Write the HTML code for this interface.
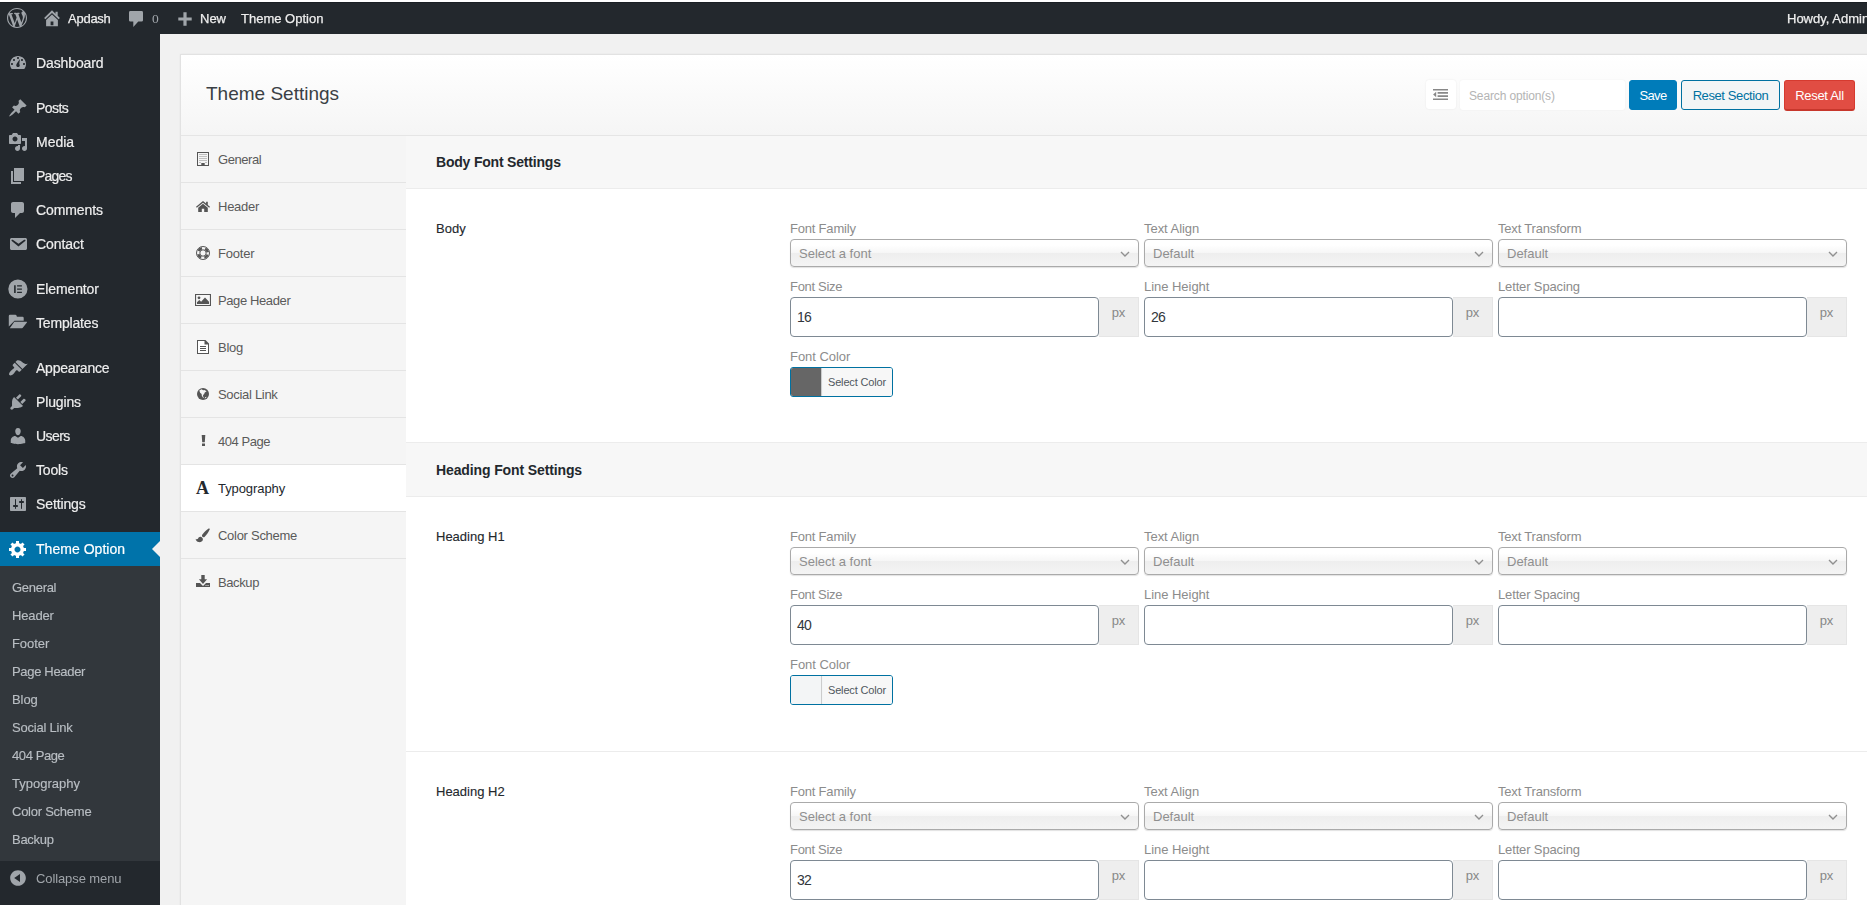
<!DOCTYPE html>
<html lang="en">
<head>
<meta charset="utf-8">
<title>Theme Settings</title>
<style>
*{box-sizing:border-box;margin:0;padding:0}
html,body{width:1867px;height:905px;overflow:hidden}
body{background:#f1f1f1;font-family:"Liberation Sans",sans-serif;font-size:13px;color:#444;position:relative}
svg{display:block}
#topline{position:absolute;left:0;top:0;width:1867px;height:2px;background:#fff}
#adminbar{position:absolute;left:0;top:2px;width:1867px;height:32px;background:#23282d;box-shadow:inset 0 1px 0 #1a1f24;color:#eee;font-size:13px}
#adminbar .t{will-change:transform;position:absolute;top:1px;line-height:32px;white-space:nowrap;-webkit-text-stroke:.25px #eee}
#adminbar svg{position:absolute}
#side{position:absolute;left:0;top:34px;width:160px;height:871px;background:#23282d}
.mi{position:absolute;left:0;width:160px;height:34px;color:#eee;font-size:14px}
.mi span{will-change:transform;position:absolute;left:36px;top:0;line-height:35px;white-space:nowrap;-webkit-text-stroke:.2px #eee}
.mi svg{position:absolute;fill:#a0a5aa}
.mi.cur{background:#0073aa;color:#fff}
.mi.cur span{-webkit-text-stroke:.2px #fff}
.mi.cur svg{fill:#fff}
.mi.cur:after{content:"";position:absolute;right:0;top:9px;border:8px solid transparent;border-right-color:#f1f1f1}
#sub{position:absolute;left:0;top:532px;width:160px;height:295px;background:#32373c}
#sub div{will-change:transform;position:absolute;left:12px;height:28px;line-height:29px;color:#b9bec3;-webkit-text-stroke:.15px #b9bec3;font-size:13px;white-space:nowrap}
#collapse{position:absolute;left:0;top:827px;width:160px;height:34px;color:#a0a5aa;font-size:13px}
#collapse span{will-change:transform;position:absolute;left:36px;line-height:35px;white-space:nowrap}
#panel{position:absolute;left:180px;top:54px;width:1700px;height:870px;background:#fff;border:1px solid #e2e2e2;box-shadow:0 0 2px rgba(0,0,0,.05)}
#phead{position:absolute;left:0;top:0;width:100%;height:81px;background:linear-gradient(#fff,#f5f5f5);border-bottom:1px solid #e5e5e5}
#phead h2{position:absolute;left:25px;top:0;line-height:78px;font-size:19px;font-weight:400;color:#3a3f44;white-space:nowrap}
#nav{position:absolute;left:0;top:81px;width:225px;height:800px;background:#f5f5f5}
.ni{position:absolute;left:0;width:225px;height:47px;border-bottom:1px solid #e4e4e4;color:#5a5a5a;font-size:13px}
.ni span{position:absolute;left:37px;top:0;line-height:48px;white-space:nowrap}
.ni svg{position:absolute;fill:#555}
.ni.act{background:#fff;color:#23282d}
.ni i.ta{position:absolute;left:15px;top:0;line-height:46px;font-family:"Liberation Serif",serif;font-weight:700;font-style:normal;font-size:18px;color:#23282d}
#main{position:absolute;left:225px;top:81px;width:1475px;height:800px;background:#fff}
.band{position:absolute;left:0;width:100%;background:#f7f7f7;border-bottom:1px solid #ececec}
.band b{position:absolute;left:30px;font-size:14px;color:#23282d;white-space:nowrap;line-height:16px}
.rowline{position:absolute;left:0;width:100%;height:1px;background:#ececec}
.flabel{position:absolute;left:30px;font-size:13px;color:#23282d;white-space:nowrap;line-height:16px;-webkit-text-stroke:.12px #23282d}
.lb{position:absolute;font-size:13px;color:#8c8c8c;white-space:nowrap;line-height:16px}
.sel{position:absolute;height:28px;border:1px solid #aaa;border-radius:4px;background:linear-gradient(#fff 20%,#f6f6f6 50%,#eee 52%,#f4f4f4);box-shadow:0 1px 1px rgba(0,0,0,.12);color:#8f8f8f;font-size:13px;line-height:27px;padding-left:8px;white-space:nowrap}
.sel svg{position:absolute;right:8px;top:11px}
.inp{position:absolute;height:40px;border:1px solid #7e8993;border-radius:4px;background:#fff;color:#32373c;font-size:14px;line-height:38px;padding-left:6px;letter-spacing:-.7px}
.px{position:absolute;width:40px;height:40px;background:#eee;border:1px solid #e5e5e5;border-left:0;color:#888;font-size:13px;text-align:center;line-height:30px}
.cp{position:absolute;width:103px;height:30px;border:1px solid #0071a1;border-radius:3px;background:#f3f5f6;overflow:hidden}
.cp i{position:absolute;left:0;top:0;width:31px;height:28px;border-right:1px solid #ccc}
.cp span{position:absolute;left:32px;top:0;width:70px;padding-left:5px;background:#f7f7f7;line-height:28px;font-size:11px;color:#50575e;white-space:nowrap}
.btn{position:absolute;top:25px;height:30px;border-radius:3px;font-size:13px;line-height:30px;text-align:center;white-space:nowrap}
#exp{position:absolute;left:1245px;top:25px;width:30px;height:29px;background:#fff;border-radius:3px;box-shadow:0 0 2px rgba(0,0,0,.08)}
#exp svg{position:absolute;left:7px;top:9px}
#search{position:absolute;left:1279px;top:25px;width:165px;height:30px;background:#fff;border-radius:3px;color:#b4b4b4;font-size:12px;line-height:33px;padding-left:9px;box-shadow:0 0 2px rgba(0,0,0,.06);white-space:nowrap}
#bsave{left:1448px;width:48px;background:#007cba;color:#fff;border:1px solid #007cba}
#breset{left:1500px;width:99px;background:#f3f5f6;color:#0071a1;border:1px solid #0071a1}
#ball{left:1603px;width:71px;height:31px;background:#e14d43;color:#fff;border:1px solid #d63a2f;border-bottom:2px solid #c7372c;line-height:29px}
</style>
</head>
<body>
<div id="panel">
  <div id="phead"><h2>Theme Settings</h2>
    <div id="exp"><svg width="15" height="11" viewBox="0 0 15 11"><path fill="#888" d="M0 0h15v1.600H0zM4.600 3.100H15v1.600H4.600zM4.600 6.300H15v1.600H4.600zM0 9.400h15V11H0zM3.200 2.700v5.600L.1 5.500z"/></svg></div>
    <div id="search" style="letter-spacing:-.14px">Search option(s)</div>
    <div class="btn" id="bsave" style="letter-spacing:-.7px">Save</div>
    <div class="btn" id="breset" style="letter-spacing:-.4px">Reset Section</div>
    <div class="btn" id="ball" style="letter-spacing:-.3px">Reset All</div>
  </div>
  <div id="nav">
    <div class="ni" style="top:0px"><svg style="left:16px;top:16px" width="12" height="14" viewBox="0 0 12 14"><path fill-rule="evenodd" d="M0 0h12v14H0zM1 1v12h3.300v-2h3.400v2H11V1z"/><path fill="#8a8a8a" d="M2.5 2h1v1h-1zM4.5 2h1v1h-1zM6.5 2h1v1h-1zM8.5 2h1v1h-1zM2.5 4h1v1h-1zM4.5 4h1v1h-1zM6.5 4h1v1h-1zM8.5 4h1v1h-1zM2.5 6h1v1h-1zM4.5 6h1v1h-1zM6.5 6h1v1h-1zM8.5 6h1v1h-1zM2.5 8h1v1h-1zM4.5 8h1v1h-1zM6.5 8h1v1h-1zM8.5 8h1v1h-1zM2.5 10h1v1h-1zM8.500 10h1v1h-1z"/></svg><span style="letter-spacing:-0.44px">General</span></div>
    <div class="ni" style="top:47px"><svg style="left:15px;top:18px" width="14" height="11" viewBox="0 0 14 11"><path d="M7 0L0 5.800l.8.900L7 1.700l6.200 5 .8-.9-2.200-1.800V.8h-1.700v1.800zM7 2.800L2.200 6.700V11h3.600V7.800h2.400V11h3.600V6.700z"/></svg><span style="letter-spacing:-0.25px">Header</span></div>
    <div class="ni" style="top:94px"><svg style="left:15px;top:16px" width="14" height="14" viewBox="0 0 14 14"><g fill="none" stroke="#555"><circle cx="7" cy="7" r="6.500" stroke-width="1"/><circle cx="7" cy="7" r="3.200" stroke-width="1"/><circle cx="7" cy="7" r="4.850" stroke-width="2.600" stroke-dasharray="4.300 3.320" stroke-dashoffset="-1.650"/></g></svg><span style="letter-spacing:-0.20px">Footer</span></div>
    <div class="ni" style="top:141px"><svg style="left:14px;top:17px" width="16" height="12" viewBox="0 0 16 12"><path fill-rule="evenodd" d="M0 0h16v12H0zM1.100 1.100v9.800h13.800V1.100z"/><circle cx="4" cy="3.800" r="1.400"/><path d="M2 10V8.300l2.300-2.200 1.800 1.600L10 3.600l4 4.200V10z"/></svg><span style="letter-spacing:-0.39px">Page Header</span></div>
    <div class="ni" style="top:188px"><svg style="left:16px;top:16px" width="12" height="14" viewBox="0 0 12 14"><path fill="#fff" d="M.5.500h7.800l3.200 3.200v9.800H.5z"/><path fill-rule="evenodd" d="M0 0h8.500L12 3.500V14H0zM1 1v12h10V4.500H7.500V1z"/><path d="M3 6h6v.9H3zM3 8h6v.9H3zM3 10h6v.9H3z"/></svg><span style="letter-spacing:-0.28px">Blog</span></div>
    <div class="ni" style="top:235px"><svg style="left:16px;top:17px" width="12" height="12" viewBox="0 0 12 12"><circle cx="6" cy="6" r="6"/><path fill="#f5f5f5" d="M2.300 2.600l2.200-1.300 1.700.900 1.200-.300 2.200 1.400-1.800 1.300-.800 1.700-1 .700.200 1.800.800.600-.900.300-1.300-1.900-.200-1.700-1.500-1.300zM8.200 9.200l1.500-.500-.800 1.300-1.300.500z"/></svg><span style="letter-spacing:-0.30px">Social Link</span></div>
    <div class="ni" style="top:282px"><svg style="left:20px;top:17px" width="5" height="11" viewBox="0 0 5 11"><path d="M.7 0h3.600L3.800 7.200H1.200zM1 8.400h3V11H1z"/></svg><span style="letter-spacing:-0.46px">404 Page</span></div>
    <div class="ni act" style="top:329px"><i class="ta">A</i><span style="letter-spacing:-0.08px">Typography</span></div>
    <div class="ni" style="top:376px"><svg style="left:14px;top:16px" width="16" height="15" viewBox="0 0 16 15"><path d="M13.600.6c.7-.4 1.400.3 1.100 1-1.300 2.900-3 5.500-5.200 7.400-.8.700-1.900.3-2.300-.4-.4-.7-.300-1.500.400-2.300C9.500 4.200 11.400 2 13.600.6zM5.600 8.700c1.700.3 2.700 1.800 2.200 3.300-.5 1.600-2.300 2.500-4.100 2.100C2 13.700.9 12.500.6 10.700c.9.800 2 .600 2.500-.300.5-.900 1.200-1.900 2.500-1.700z"/></svg><span style="letter-spacing:-0.28px">Color Scheme</span></div>
    <div class="ni" style="top:423px;border-bottom:0"><svg style="left:15px;top:16px" width="14" height="13" viewBox="0 0 14 13"><path fill-rule="evenodd" d="M5.300 0h3.400v4.300h2.400L7 8.900 2.900 4.300h2.400zM0 8h4l3 3 3-3h4v4H0zM9.500 10.200v.8h.8v-.8zM10.700 10.200v.8h.8v-.8zM11.900 10.200v.8h.8v-.8z"/></svg><span style="letter-spacing:-0.40px">Backup</span></div>
  </div>
  <div id="main">
    <div class="band" style="top:0;height:53px"><b style="top:18px;letter-spacing:-.2px">Body Font Settings</b></div>
    <div class="flabel" style="top:85px;">Body</div>
    <div class="lb" style="left:384px;top:85px;letter-spacing:-0.20px">Font Family</div>
    <div class="sel" style="left:384px;top:103px;width:349px"><span>Select a font</span><svg width="10" height="7" viewBox="0 0 10 7"><path d="M1 1l4 4 4-4" fill="none" stroke="#909090" stroke-width="1.400"/></svg></div>
    <div class="lb" style="left:738px;top:85px;letter-spacing:-0.04px">Text Align</div>
    <div class="sel" style="left:738px;top:103px;width:349px"><span>Default</span><svg width="10" height="7" viewBox="0 0 10 7"><path d="M1 1l4 4 4-4" fill="none" stroke="#909090" stroke-width="1.400"/></svg></div>
    <div class="lb" style="left:1092px;top:85px;letter-spacing:-0.19px">Text Transform</div>
    <div class="sel" style="left:1092px;top:103px;width:349px"><span>Default</span><svg width="10" height="7" viewBox="0 0 10 7"><path d="M1 1l4 4 4-4" fill="none" stroke="#909090" stroke-width="1.400"/></svg></div>
    <div class="lb" style="left:384px;top:143px;letter-spacing:-0.30px">Font Size</div>
    <div class="inp" style="left:384px;top:161px;width:309px">16</div>
    <div class="px" style="left:693px;top:161px">px</div>
    <div class="lb" style="left:738px;top:143px;letter-spacing:-0.04px">Line Height</div>
    <div class="inp" style="left:738px;top:161px;width:309px">26</div>
    <div class="px" style="left:1047px;top:161px">px</div>
    <div class="lb" style="left:1092px;top:143px;letter-spacing:-0.14px">Letter Spacing</div>
    <div class="inp" style="left:1092px;top:161px;width:309px"></div>
    <div class="px" style="left:1401px;top:161px">px</div>
    <div class="lb" style="left:384px;top:213px;letter-spacing:-0.04px">Font Color</div>
    <div class="cp" style="left:384px;top:231px"><i style="background:#666"></i><span style="letter-spacing:-.17px">Select Color</span></div>
    <div class="band" style="top:306px;height:55px;border-top:1px solid #ececec"><b style="top:19px;letter-spacing:-.12px">Heading Font Settings</b></div>
    <div class="flabel" style="top:393px;">Heading H1</div>
    <div class="lb" style="left:384px;top:393px;letter-spacing:-0.20px">Font Family</div>
    <div class="sel" style="left:384px;top:411px;width:349px"><span>Select a font</span><svg width="10" height="7" viewBox="0 0 10 7"><path d="M1 1l4 4 4-4" fill="none" stroke="#909090" stroke-width="1.400"/></svg></div>
    <div class="lb" style="left:738px;top:393px;letter-spacing:-0.04px">Text Align</div>
    <div class="sel" style="left:738px;top:411px;width:349px"><span>Default</span><svg width="10" height="7" viewBox="0 0 10 7"><path d="M1 1l4 4 4-4" fill="none" stroke="#909090" stroke-width="1.400"/></svg></div>
    <div class="lb" style="left:1092px;top:393px;letter-spacing:-0.19px">Text Transform</div>
    <div class="sel" style="left:1092px;top:411px;width:349px"><span>Default</span><svg width="10" height="7" viewBox="0 0 10 7"><path d="M1 1l4 4 4-4" fill="none" stroke="#909090" stroke-width="1.400"/></svg></div>
    <div class="lb" style="left:384px;top:451px;letter-spacing:-0.30px">Font Size</div>
    <div class="inp" style="left:384px;top:469px;width:309px">40</div>
    <div class="px" style="left:693px;top:469px">px</div>
    <div class="lb" style="left:738px;top:451px;letter-spacing:-0.04px">Line Height</div>
    <div class="inp" style="left:738px;top:469px;width:309px"></div>
    <div class="px" style="left:1047px;top:469px">px</div>
    <div class="lb" style="left:1092px;top:451px;letter-spacing:-0.14px">Letter Spacing</div>
    <div class="inp" style="left:1092px;top:469px;width:309px"></div>
    <div class="px" style="left:1401px;top:469px">px</div>
    <div class="lb" style="left:384px;top:521px;letter-spacing:-0.04px">Font Color</div>
    <div class="cp" style="left:384px;top:539px"><i style="background:#f3f5f6"></i><span style="letter-spacing:-.17px">Select Color</span></div>
    <div class="rowline" style="top:615px"></div>
    <div class="flabel" style="top:648px;">Heading H2</div>
    <div class="lb" style="left:384px;top:648px;letter-spacing:-0.20px">Font Family</div>
    <div class="sel" style="left:384px;top:666px;width:349px"><span>Select a font</span><svg width="10" height="7" viewBox="0 0 10 7"><path d="M1 1l4 4 4-4" fill="none" stroke="#909090" stroke-width="1.400"/></svg></div>
    <div class="lb" style="left:738px;top:648px;letter-spacing:-0.04px">Text Align</div>
    <div class="sel" style="left:738px;top:666px;width:349px"><span>Default</span><svg width="10" height="7" viewBox="0 0 10 7"><path d="M1 1l4 4 4-4" fill="none" stroke="#909090" stroke-width="1.400"/></svg></div>
    <div class="lb" style="left:1092px;top:648px;letter-spacing:-0.19px">Text Transform</div>
    <div class="sel" style="left:1092px;top:666px;width:349px"><span>Default</span><svg width="10" height="7" viewBox="0 0 10 7"><path d="M1 1l4 4 4-4" fill="none" stroke="#909090" stroke-width="1.400"/></svg></div>
    <div class="lb" style="left:384px;top:706px;letter-spacing:-0.30px">Font Size</div>
    <div class="inp" style="left:384px;top:724px;width:309px">32</div>
    <div class="px" style="left:693px;top:724px">px</div>
    <div class="lb" style="left:738px;top:706px;letter-spacing:-0.04px">Line Height</div>
    <div class="inp" style="left:738px;top:724px;width:309px"></div>
    <div class="px" style="left:1047px;top:724px">px</div>
    <div class="lb" style="left:1092px;top:706px;letter-spacing:-0.14px">Letter Spacing</div>
    <div class="inp" style="left:1092px;top:724px;width:309px"></div>
    <div class="px" style="left:1401px;top:724px">px</div>
    <div class="lb" style="left:384px;top:776px;letter-spacing:-0.04px">Font Color</div>
    <div class="cp" style="left:384px;top:794px"><i style="background:#f3f5f6"></i><span style="letter-spacing:-.17px">Select Color</span></div>
      </div>
</div>
<div id="topline"></div>
<div id="side">
  <div class="mi" style="top:12px"><svg style="left:8px;top:7px" width="20" height="20" viewBox="0 0 20 20"><path d="M3.76 16h12.48c1.1-1.37 1.76-3.11 1.76-5 0-4.42-3.58-8-8-8s-8 3.58-8 8c0 1.89.66 3.63 1.76 5zM10 4c.55 0 1 .45 1 1s-.45 1-1 1-1-.45-1-1 .45-1 1-1zM6 6c.55 0 1 .45 1 1s-.45 1-1 1-1-.45-1-1 .45-1 1-1zm8 0c.55 0 1 .45 1 1s-.45 1-1 1-1-.45-1-1 .45-1 1-1zm-2.630 5.150c.62.75.52 1.870-.22 2.500-.75.63-1.870.54-2.500-.21-.46-.55-.55-1.290-.29-1.910.53-1.280 3.640-5.530 3.640-5.530s-.7 4.500-.63 5.150zM4 10c.55 0 1 .45 1 1s-.45 1-1 1-1-.45-1-1 .45-1 1-1zm12 0c.55 0 1 .45 1 1s-.45 1-1 1-1-.45-1-1 .45-1 1-1z"/></svg><span style="letter-spacing:-0.11px">Dashboard</span></div>
  <div class="mi" style="top:57px"><svg style="left:8px;top:7px" width="20" height="20" viewBox="0 0 20 20"><path d="M10.44 3.02l1.82-1.82 6.36 6.35-1.83 1.82c-1.05-.68-2.48-.57-3.41.36l-.75.75c-.92.93-1.04 2.35-.35 3.41l-1.83 1.82-2.41-2.41-2.8 2.79c-.42.42-3.38 2.71-3.8 2.29s1.86-3.39 2.28-3.81l2.79-2.79L4.1 9.36l1.83-1.82c1.05.69 2.48.57 3.4-.36l.75-.75c.93-.92 1.05-2.35.36-3.41z"/></svg><span style="letter-spacing:-0.58px">Posts</span></div>
  <div class="mi" style="top:91px"><svg style="left:8px;top:7px" width="20" height="20" viewBox="0 0 20 20"><path d="M13 11V4c0-.55-.45-1-1-1h-1.670L9 1H5L3.670 3H2c-.55 0-1 .45-1 1v7c0 .55.45 1 1 1h10c.55 0 1-.45 1-1zM7 4.500c1.380 0 2.500 1.120 2.500 2.500S8.380 9.500 7 9.500 4.500 8.380 4.500 7 5.620 4.500 7 4.500zM14 6h5v10.500c0 1.380-1.120 2.500-2.500 2.500S14 17.880 14 16.500s1.120-2.500 2.500-2.500c.17 0 .34.020.5.050V9h-3V6zm-4 8.050V13h2v3.500c0 1.380-1.120 2.500-2.500 2.500S7 17.880 7 16.500 8.120 14 9.500 14c.17 0 .34.020.5.050z"/></svg><span style="">Media</span></div>
  <div class="mi" style="top:125px"><svg style="left:8px;top:7px" width="20" height="20" viewBox="0 0 20 20"><path d="M6 15V2h10v13H6zm-1 1h8v2H3V5h2v11z"/></svg><span style="letter-spacing:-0.78px">Pages</span></div>
  <div class="mi" style="top:159px"><svg style="left:8px;top:7px" width="20" height="20" viewBox="0 0 20 20"><path d="M5 2h9c1.100 0 2 .9 2 2v7c0 1.100-.9 2-2 2h-2l-5 5v-5H5c-1.100 0-2-.9-2-2V4c0-1.100.9-2 2-2z"/></svg><span style="letter-spacing:-0.10px">Comments</span></div>
  <div class="mi" style="top:193px"><svg style="left:8px;top:7px" width="20" height="20" viewBox="0 0 20 20"><path d="M3.870 4h13.250C18.370 4 19 4.590 19 5.790v8.420c0 1.190-.63 1.790-1.880 1.790H3.870c-1.250 0-1.880-.6-1.880-1.790V5.790c0-1.200.63-1.790 1.880-1.790zm6.620 8.600l6.740-5.530c.24-.2.43-.66.13-1.070-.29-.41-.82-.42-1.170-.17l-5.700 3.860L4.800 5.830c-.35-.25-.88-.24-1.170.17-.3.41-.110.87.130 1.070z"/></svg><span style="letter-spacing:-0.07px">Contact</span></div>
  <div class="mi" style="top:238px"><svg style="left:8px;top:7px" width="20" height="20" viewBox="0 0 20 20"><path d="M9.900.400a9.600 9.600 0 1 0 0 19.200 9.600 9.600 0 0 0 0-19.200zM7.700 13.900H6.100V6.300h1.600zm6.200 0H9.100v-1.100h4.800zm0-3.250H9.100v-1.100h4.800zm0-3.250H9.100V6.300h4.800z"/></svg><span style="letter-spacing:-0.11px">Elementor</span></div>
  <div class="mi" style="top:272px"><svg style="left:8px;top:7px" width="20" height="20" viewBox="0 0 20 20"><path d="M.8 3Q.8 1.800 2 1.800H7.300Q8.300 1.800 8.600 2.800L8.900 3.800H14.500Q15.700 3.800 15.700 5V7.800H6.500L.8 13.500zM6.300 8.700H18.600Q19.300 8.700 18.900 9.400L14.800 14.800Q14.500 15.200 14 15.200H1.800z"/></svg><span style="letter-spacing:-0.17px">Templates</span></div>
  <div class="mi" style="top:317px"><svg style="left:8px;top:7px" width="20" height="20" viewBox="0 0 20 20"><path d="M14.480 11.060L7.410 3.990l1.500-1.500c.5-.56 2.300-.47 3.510.32 1.210.8 1.430 1.280 2.910 2.100 1.180.64 2.450 1.260 4.450.85zm-.71.710L6.700 4.700 4.930 6.470c-.39.39-.39 1.020 0 1.410l1.060 1.060c.39.39.39 1.030 0 1.420-.6.6-1.430 1.110-2.210 1.690-.35.26-.7.53-1.010.84C1.430 14.230.4 16.080 1.400 17.070c.99 1 2.840-.03 4.180-1.360.31-.31.58-.66.850-1.020.57-.78 1.080-1.610 1.690-2.210.39-.39 1.020-.39 1.410 0l1.060 1.060c.39.39 1.020.39 1.410 0z"/></svg><span style="letter-spacing:-0.22px">Appearance</span></div>
  <div class="mi" style="top:351px"><svg style="left:8px;top:7px" width="20" height="20" viewBox="0 0 20 20"><path d="M13.110 4.360L9.870 7.600 8 5.730l3.240-3.240c.35-.34 1.050-.2 1.560.32.520.51.660 1.210.31 1.550zm-8 1.770l.91-1.120 9.010 9.010-1.190.84c-.71.71-2.630 1.160-3.820 1.160H6.140L4.900 17.260c-.59.59-1.540.59-2.120 0-.59-.58-.59-1.530 0-2.120l1.240-1.240v-3.880c0-1.130.4-3.190 1.090-3.890zm7.260 3.970l3.240-3.240c.34-.35 1.040-.21 1.550.31.520.51.660 1.210.31 1.550l-3.240 3.250z"/></svg><span style="letter-spacing:-0.14px">Plugins</span></div>
  <div class="mi" style="top:385px"><svg style="left:8px;top:7px" width="20" height="20" viewBox="0 0 20 20"><path d="M10 9.250c-2.270 0-2.730-3.440-2.730-3.440C7 4.020 7.820 2 9.970 2c2.160 0 2.980 2.020 2.710 3.810 0 0-.41 3.440-2.680 3.440zm0 2.570L12.720 10c2.390 0 4.520 2.330 4.520 4.530v2.490s-3.650 1.130-7.240 1.130c-3.650 0-7.240-1.130-7.240-1.130v-2.490c0-2.250 1.940-4.480 4.470-4.480z"/></svg><span style="letter-spacing:-0.58px">Users</span></div>
  <div class="mi" style="top:419px"><svg style="left:8px;top:7px" width="20" height="20" viewBox="0 0 20 20"><path d="M16.680 9.770c-1.340 1.340-3.300 1.670-4.950.99l-5.410 6.520c-.99.99-2.590.99-3.580 0s-.99-2.590 0-3.570l6.520-5.420c-.68-1.650-.35-3.610.99-4.950 1.280-1.280 3.120-1.620 4.720-1.060l-2.890 2.890 2.820 2.820 2.860-2.870c.53 1.580.18 3.390-1.080 4.650zM3.810 16.210c.4.390 1.040.39 1.430 0 .4-.4.4-1.040 0-1.430-.39-.4-1.030-.4-1.430 0-.39.39-.39 1.030 0 1.430z"/></svg><span style="letter-spacing:-0.20px">Tools</span></div>
  <div class="mi" style="top:453px"><svg style="left:8px;top:7px" width="20" height="20" viewBox="0 0 20 20"><path d="M18 16V4c0-.55-.45-1-1-1H3c-.55 0-1 .45-1 1v12c0 .55.45 1 1 1h14c.55 0 1-.45 1-1zM8 11h1c.55 0 1 .45 1 1s-.45 1-1 1H8v1.500c0 .28-.22.500-.5.500s-.5-.22-.5-.5V13H6c-.55 0-1-.45-1-1s.45-1 1-1h1V5.500c0-.28.22-.5.5-.5s.5.220.5.500V11zm5-2h-1c-.55 0-1-.45-1-1s.45-1 1-1h1V5.500c0-.28.22-.5.5-.5s.5.220.5.500V7h1c.55 0 1 .45 1 1s-.45 1-1 1h-1v5.500c0 .28-.22.5-.5.5s-.5-.22-.5-.5V9z"/></svg><span style="letter-spacing:-0.12px">Settings</span></div>
  <div class="mi cur" style="top:498px"><svg style="left:8px;top:7px" width="20" height="20" viewBox="0 0 20 20"><path d="M18 12h-2.180c-.17.7-.44 1.350-.81 1.930l1.540 1.540-2.100 2.100-1.540-1.540c-.58.36-1.230.63-1.910.79V19H8v-2.180c-.68-.16-1.330-.43-1.910-.79l-1.540 1.540-2.120-2.120 1.540-1.540c-.36-.58-.63-1.230-.79-1.910H1V9.030h2.170c.16-.7.44-1.350.8-1.940L2.430 5.550l2.100-2.100 1.540 1.540c.58-.37 1.240-.64 1.930-.81V2h3v2.180c.68.160 1.330.43 1.910.79l1.540-1.540 2.120 2.120-1.540 1.540c.36.590.64 1.240.8 1.940H18V12zm-8.500 1.500c1.660 0 3-1.340 3-3s-1.340-3-3-3-3 1.340-3 3 1.340 3 3 3z"/></svg><span style="letter-spacing:0.03px">Theme Option</span></div>
  <div id="sub">
    <div style="top:7px;letter-spacing:-0.29px">General</div>
    <div style="top:35px;letter-spacing:-0.15px">Header</div>
    <div style="top:63px;letter-spacing:-0.07px">Footer</div>
    <div style="top:91px;letter-spacing:-0.32px">Page Header</div>
    <div style="top:119px;letter-spacing:-0.07px">Blog</div>
    <div style="top:147px;letter-spacing:-0.22px">Social Link</div>
    <div style="top:175px;letter-spacing:-0.41px">404 Page</div>
    <div style="top:203px">Typography</div>
    <div style="top:231px;letter-spacing:-0.25px">Color Scheme</div>
    <div style="top:259px;letter-spacing:-0.28px">Backup</div>
  </div>
  <div id="collapse"><svg style="position:absolute;left:8px;top:7px" width="20" height="20" viewBox="0 0 20 20"><path fill="#a0a5aa" d="M10 2.160c4.330 0 7.840 3.510 7.840 7.840s-3.510 7.840-7.840 7.840S2.160 14.330 2.160 10 5.670 2.160 10 2.160zm2 11.720V6.120L6.180 9.970z"/></svg><span style="letter-spacing:-.1px">Collapse menu</span></div>
</div>
<div id="adminbar">
  <svg style="left:7px;top:6px" width="20" height="20" viewBox="0 0 20 20"><path fill="#a0a5aa" d="M20 10c0-5.510-4.490-10-10-10C4.480 0 0 4.490 0 10c0 5.520 4.480 10 10 10 5.510 0 10-4.480 10-10zM7.780 15.370L4.370 6.220c.55-.02 1.170-.08 1.170-.08.5-.06.44-1.130-.06-1.110 0 0-1.450.11-2.370.11-.18 0-.37 0-.58-.01C4.120 2.690 6.870 1.110 10 1.110c2.330 0 4.450.87 6.050 2.340-.68-.11-1.650.39-1.650 1.580 0 .74.450 1.360.9 2.100.35.61.55 1.360.55 2.460 0 1.490-1.400 5-1.400 5l-3.030-8.370c.54-.02.82-.17.82-.17.5-.05.44-1.250-.06-1.220 0 0-1.440.12-2.380.12-.87 0-2.330-.12-2.330-.12-.5-.03-.56 1.200-.06 1.220l.92.08 1.260 3.410zM17.410 10c.24-.64.74-1.870.43-4.250.7 1.290 1.050 2.710 1.050 4.250 0 3.290-1.730 6.240-4.400 7.780.97-2.590 1.940-5.200 2.920-7.780zM6.100 18.090C3.120 16.650 1.110 13.530 1.110 10c0-1.300.23-2.480.72-3.590C3.250 10.300 4.670 14.200 6.100 18.090zm4.030-6.630l2.580 6.980c-.86.290-1.760.450-2.710.450-.79 0-1.570-.110-2.290-.330.81-2.380 1.620-4.740 2.420-7.100z"/></svg>
  <svg style="left:44px;top:8px" width="16" height="17" viewBox="0 0 16 17"><path fill="#a0a5aa" fill-rule="evenodd" d="M8 .2L.1 7.900l1.300 1.300L8 2.900l6.600 6.300 1.300-1.300-2.200-2.100V1.800h-2.200v1.900zM8 4.400L2.100 10v6.200h11.800V10zM6.600 11.600h2.800v3.600H6.600z"/></svg>
  <span class="t" style="left:68px;letter-spacing:-.25px">Apdash</span>
  <svg style="left:129px;top:9px" width="14" height="16" viewBox="0 0 14 16"><path fill="#a0a5aa" d="M1.400 0h11.200a1.400 1.400 0 0 1 1.400 1.400v7.800a1.400 1.400 0 0 1-1.400 1.400H9.300L4.300 16V10.600H1.400A1.400 1.400 0 0 1 0 9.200V1.400A1.400 1.400 0 0 1 1.400 0z"/></svg>
  <span class="t" style="left:152px;color:#a0a5aa;-webkit-text-stroke:0;font-family:'Liberation Serif',serif;font-size:13.500px">0</span>
  <svg style="left:178px;top:10px" width="14" height="14" viewBox="0 0 14 14"><path fill="#a0a5aa" d="M5.400.3h3.200v5.100h5.100v3.200H8.600v5.100H5.400V8.600H.3V5.400h5.100z"/></svg>
  <span class="t" style="left:200px">New</span>
  <span class="t" style="left:241px">Theme Option</span>
  <span class="t" style="left:1787px">Howdy, Admin</span>
</div>
</body>
</html>
